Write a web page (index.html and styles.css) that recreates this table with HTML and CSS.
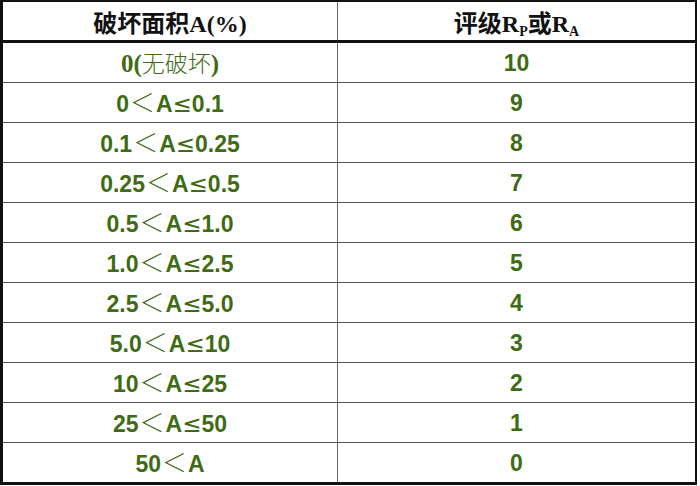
FILE: index.html
```html
<!DOCTYPE html>
<html>
<head>
<meta charset="utf-8">
<link rel="stylesheet" href="styles.css">
</head>
<body>
<table class="grade">
<thead>
<tr><th class="c1">破坏面积A(%)</th><th class="c2">评级R<sub>P</sub>或R<sub>A</sub></th></tr>
</thead>
<tbody>
<tr><td><span class="serif">0(</span><span class="cjk">无破坏</span><span class="serif">)</span></td><td>10</td></tr>
<tr><td>0<span class="lt">＜</span>A<span class="le">≤</span>0.1</td><td>9</td></tr>
<tr><td>0.1<span class="lt">＜</span>A<span class="le">≤</span>0.25</td><td>8</td></tr>
<tr><td>0.25<span class="lt">＜</span>A<span class="le">≤</span>0.5</td><td>7</td></tr>
<tr><td>0.5<span class="lt">＜</span>A<span class="le">≤</span>1.0</td><td>6</td></tr>
<tr><td>1.0<span class="lt">＜</span>A<span class="le">≤</span>2.5</td><td>5</td></tr>
<tr><td>2.5<span class="lt">＜</span>A<span class="le">≤</span>5.0</td><td>4</td></tr>
<tr><td>5.0<span class="lt">＜</span>A<span class="le">≤</span>10</td><td>3</td></tr>
<tr><td>10<span class="lt">＜</span>A<span class="le">≤</span>25</td><td>2</td></tr>
<tr><td>25<span class="lt">＜</span>A<span class="le">≤</span>50</td><td>1</td></tr>
<tr><td>50<span class="lt">＜</span>A</td><td>0</td></tr>
</tbody>
</table>
</body>
</html>
```
FILE: styles.css
```css
html, body {
  margin: 0;
  padding: 0;
  background: #ffffff;
}
.grade {
  border-collapse: collapse;
  width: 697px;
  table-layout: fixed;
  border-top: 2px solid #111;
  border-left: 3px solid #111;
  border-right: 2px solid #111;
  border-bottom: 3px solid #111;
}
.grade th {
  height: 38px;
  padding: 0;
  font-family: "Liberation Serif", "Noto Sans CJK SC", serif;
  font-weight: bold;
  font-size: 24px;
  color: #111;
  text-align: center;
  border-bottom: 3px solid #111;
  border-right: 1px solid #666;
}
.grade th.c1 { width: 334px; }
.grade th.c2 { border-right: none; }
.grade sub {
  font-size: 14px;
  vertical-align: -4px;
  line-height: 0;
}
.grade td {
  height: 39px;
  padding: 0;
  text-align: center;
  font-family: "Liberation Sans", "Noto Sans CJK SC", sans-serif;
  font-weight: bold;
  font-size: 23px;
  line-height: 26px;
  color: #3f6b14;
  border-bottom: 1px solid #555;
  border-right: 1px solid #666;
}
.grade td:last-child { border-right: none; }
.grade tr:last-child td { border-bottom: none; }
.serif {
  font-family: "Liberation Serif", serif;
  font-size: 25px;
}
.cjk {
  font-family: "Noto Sans CJK SC", sans-serif;
  font-weight: 300;
  font-size: 23px;
}
.lt {
  font-family: "Noto Sans CJK SC", sans-serif;
  font-weight: 200;
  font-size: 25px;
  margin: 0 1px;
}
.le {
  font-family: "DejaVu Sans", sans-serif;
  font-weight: normal;
  font-size: 23px;
}
```
